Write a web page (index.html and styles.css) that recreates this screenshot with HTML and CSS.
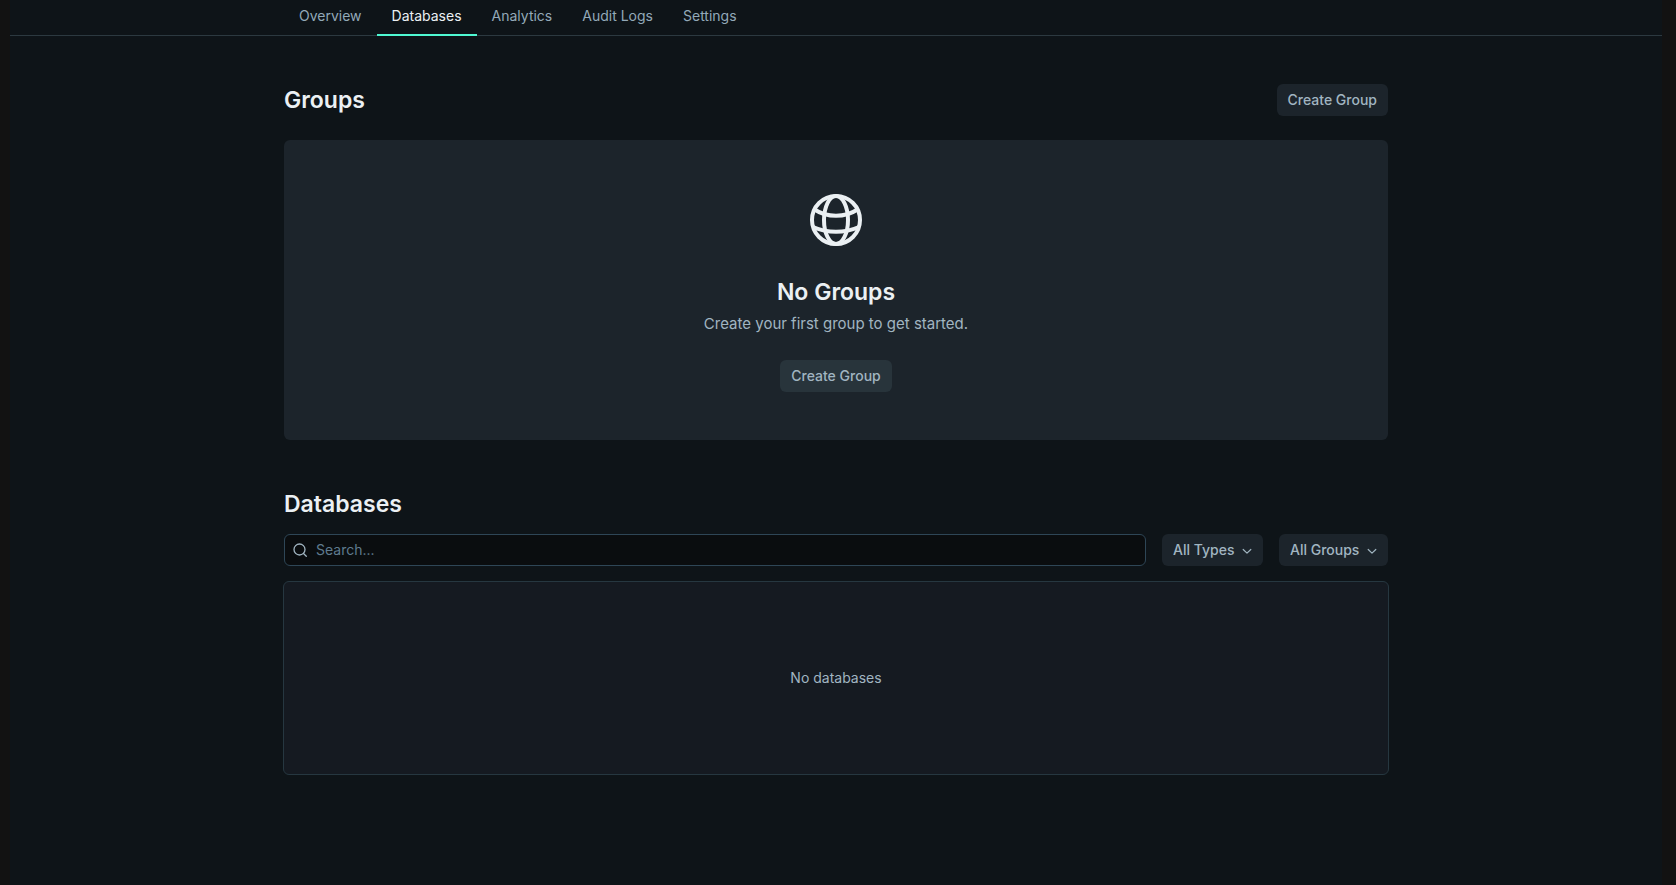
FILE: index.html
```html
<!DOCTYPE html>
<html lang="en">
<head>
<meta charset="utf-8">
<meta name="viewport" content="width=device-width, initial-scale=1">
<title>Databases</title>
<link rel="stylesheet" href="styles.css">
</head>
<body>
<div class="app">
  <header class="topbar">
    <nav class="tabs container" aria-label="Sections">
      <a class="tab" href="#overview">Overview</a>
      <a class="tab tab-active" href="#databases" aria-current="page">Databases</a>
      <a class="tab" href="#analytics">Analytics</a>
      <a class="tab" href="#audit-logs">Audit Logs</a>
      <a class="tab" href="#settings">Settings</a>
    </nav>
  </header>
  <main class="container main">
    <section class="groups">
      <div class="section-head">
        <h2 class="title">Groups</h2>
        <button class="button" type="button">Create Group</button>
      </div>
      <div class="empty-card">
        <svg class="globe" viewBox="0 0 64 64" fill="none" stroke="currentColor" stroke-width="4" aria-hidden="true">
          <circle cx="32" cy="32" r="24"/>
          <ellipse cx="32" cy="32" rx="12" ry="24"/>
          <path d="M10.500 21.500Q20 27.800 32 27.800T53.500 21.500"/>
          <path d="M9 39Q20 43.800 32 43.800T55 39"/>
        </svg>
        <h3 class="title">No Groups</h3>
        <p class="empty-text">Create your first group to get started.</p>
        <button class="button button-raised" type="button">Create Group</button>
      </div>
    </section>
    <section class="databases">
      <h2 class="title">Databases</h2>
      <div class="filters">
        <div class="search">
          <svg class="search-icon" viewBox="0 0 16 16" fill="none" stroke="currentColor" stroke-width="1.3" stroke-linecap="round" aria-hidden="true">
            <circle cx="7.500" cy="7.500" r="5.500"/>
            <path d="M11.500 11.500l2.800 2.800"/>
          </svg>
          <input class="search-input" type="text" placeholder="Search..." aria-label="Search databases">
        </div>
        <div class="select">
          <select class="select-input" aria-label="Type"><option>All Types</option></select>
          <svg class="chevron" viewBox="0 0 10 10" fill="none" stroke="currentColor" stroke-width="1.2" stroke-linecap="round" stroke-linejoin="round" aria-hidden="true"><path d="M1.200 3.500L5 7.100L8.800 3.500"/></svg>
        </div>
        <div class="select">
          <select class="select-input" aria-label="Group"><option>All Groups</option></select>
          <svg class="chevron" viewBox="0 0 10 10" fill="none" stroke="currentColor" stroke-width="1.2" stroke-linecap="round" stroke-linejoin="round" aria-hidden="true"><path d="M1.200 3.500L5 7.100L8.800 3.500"/></svg>
        </div>
      </div>
      <div class="list-empty">No databases</div>
    </section>
  </main>
</div>
</body>
</html>
```

FILE: styles.css
```css
* {
  box-sizing: border-box;
}

body {
  margin: 0;
  min-height: 100vh;
  padding: 0 14px 0 10px;
  display: flex;
  background: #121212;
  color: #a1b5c1;
  font: 14px/20px Inter, "Liberation Sans", sans-serif;
}

.app {
  flex: 1;
  background: #0e1418;
}

.container {
  width: 100%;
  max-width: 1136px;
  margin: 0 auto;
  padding: 0 16px;
}

.topbar {
  border-bottom: 1px solid #2c3940;
}

.tabs {
  display: flex;
}

.tab {
  margin-bottom: -1px;
  padding: 6px 15px 8px;
  border-bottom: 2px solid transparent;
  color: #93a9b8;
  text-decoration: none;
}

.tab-active {
  border-color: #4ff8d2;
  color: #ebf0f3;
}

.main {
  display: flex;
  flex-direction: column;
  gap: 48px;
  padding-top: 48px;
  padding-bottom: 48px;
}

.section-head {
  display: flex;
  align-items: center;
  justify-content: space-between;
  margin-bottom: 24px;
}

.title {
  margin: 0;
  color: #ebf0f3;
  font-size: 23px;
  font-weight: 600;
  line-height: 32px;
}

.button {
  height: 32px;
  padding: 0 11px;
  border: 0;
  border-radius: 6px;
  background: #1c242b;
  color: #a1b5c1;
  font: inherit;
  font-weight: 500;
}

.button-raised {
  background: #28343b;
}

.empty-card {
  display: flex;
  flex-direction: column;
  align-items: center;
  padding: 48px 24px;
  border-radius: 6px;
  background: #1c242b;
}

.globe {
  width: 64px;
  height: 64px;
  margin-bottom: 24px;
  color: #ebf0f3;
}

.empty-text {
  margin: 4px 0 24px;
  font-size: 15px;
  line-height: 24px;
}

.filters {
  display: flex;
  gap: 16px;
  margin: 14px 0 15px;
}

.search {
  flex: 1;
  display: flex;
  align-items: center;
  gap: 8px;
  height: 32px;
  padding: 0 7px;
  border: 1px solid #2e4656;
  border-radius: 6px;
  background: #0a0d0f;
}

.search-icon {
  width: 16px;
  height: 16px;
}

.search-input {
  flex: 1;
  padding: 0;
  border: 0;
  outline: 0;
  background: transparent;
  color: #ebf0f3;
  font: inherit;
}

.search-input::placeholder {
  color: #5f7b8e;
}

.select {
  display: grid;
  align-items: center;
  border-radius: 6px;
  background: #1c242b;
}

.select-input {
  grid-area: 1 / 1;
  height: 32px;
  padding: 0 28px 0 11px;
  border: 0;
  appearance: none;
  background: transparent;
  color: #a1b5c1;
  font: inherit;
  font-weight: 500;
}

.chevron {
  grid-area: 1 / 1;
  justify-self: end;
  width: 10px;
  height: 10px;
  margin: 2px 11px 0 0;
  pointer-events: none;
}

.list-empty {
  display: flex;
  align-items: center;
  justify-content: center;
  min-height: 194px;
  margin: 0 -1px;
  border: 1px solid #263740;
  border-radius: 6px;
  background: #151a21;
}
```
